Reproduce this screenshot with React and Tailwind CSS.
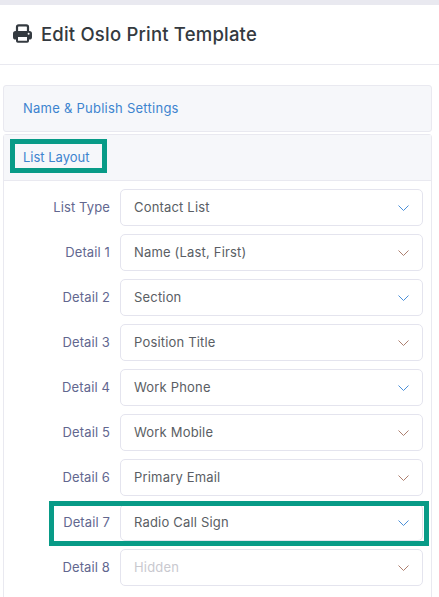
import React from 'react';

const rows = [
  { label: 'List Type', value: 'Contact List' },
  { label: 'Detail 1', value: 'Name (Last, First)', warm: true },
  { label: 'Detail 2', value: 'Section' },
  { label: 'Detail 3', value: 'Position Title', warm: true },
  { label: 'Detail 4', value: 'Work Phone' },
  { label: 'Detail 5', value: 'Work Mobile', warm: true },
  { label: 'Detail 6', value: 'Primary Email', warm: true },
  { label: 'Detail 7', value: 'Radio Call Sign', highlight: true },
  { label: 'Detail 8', value: 'Hidden', muted: true, warm: true },
];

// Two-tone chevron, like the select arrows in the screenshot
const Chevron = ({ warm }) => (
  <svg width="11" height="6" viewBox="0 0 11 6" fill="none" className="shrink-0">
    <path d="M.5.5l5 5 5-5" stroke={warm ? '#ad7f6f' : '#4a8fd8'} strokeWidth="1" />
  </svg>
);

const PrinterIcon = () => (
  <svg width="19" height="19" viewBox="0 0 19 19" fill="none" className="shrink-0">
    <path d="M4 9V3a1.7 1.7 0 0 1 1.7-1.7h7.6A1.7 1.7 0 0 1 15 3v6" stroke="#343a40" strokeWidth="2.2" />
    <rect x="0" y="7" width="19" height="8.5" rx="2.6" fill="#343a40" />
    <rect x="4" y="12" width="11" height="5.8" rx="0.8" fill="#fff" stroke="#343a40" strokeWidth="2" />
    <circle cx="15.6" cy="9.8" r="1" fill="#fff" />
  </svg>
);

const Row = ({ label, value, muted, highlight, warm }) => (
  <div className="relative flex items-center h-[37px] mb-[8px]">
    <label className="w-[106px] text-right text-[13px] text-[#62678f] tracking-[0.12px] shrink-0">{label}</label>
    <div className="ml-[10px] w-[303px] h-[37px] flex items-center justify-between pl-[13px] pr-[13px] bg-white border border-[#e4e4ee] rounded-[5px]">
      <span className={`text-[13px] tracking-[0.18px] ${muted ? 'text-[#c9c9cf]' : 'text-[#5a5e64]'}`}>{value}</span>
      <Chevron warm={warm} />
    </div>
    {highlight && (
      <div className="absolute left-[45px] top-[-3px] w-[380px] h-[45px] border-[5px] border-[#089b87]"></div>
    )}
  </div>
);

export default function App() {
  return (
    <div className="w-[439px] h-[597px] overflow-hidden bg-white font-['Inter',sans-serif]">
      <div className="h-[5px] bg-[#e9e9f0]"></div>

      {/* Page title */}
      <div className="h-[60px] border-b border-[#e9e9f0] flex items-center pl-[13px] pb-[2px]">
        <PrinterIcon />
        <h1 className="ml-[9px] mt-[2px] text-[18.5px] font-medium text-[#343a40] tracking-[0.2px]">Edit Oslo Print Template</h1>
      </div>

      <div className="pt-[20px] pl-[3px] pr-[7px]">
        <div className="h-[47px] bg-[#f6f7fa] border border-[#e9e9f0] rounded-[3px] flex items-center pl-[19px]">
          <span className="text-[13px] text-[#3d84cf] tracking-[0.25px]">Name &amp; Publish Settings</span>
        </div>

        <div className="mt-[2px] border border-[#e9e9f0] rounded-[3px]">
          <div className="relative h-[46px] bg-[#f6f7fa] border-b border-[#e9e9f0] flex items-center pl-[19px]">
            <span className="text-[13px] text-[#3d84cf]">List Layout</span>
            <div className="absolute left-[6px] top-[4px] w-[97px] h-[34px] border-[5px] border-[#089b87]"></div>
          </div>
          <div className="pt-[8px] pb-[20px]">
            {rows.map((row) => (
              <Row key={row.label} {...row} />
            ))}
          </div>
        </div>
      </div>
    </div>
  );
}
